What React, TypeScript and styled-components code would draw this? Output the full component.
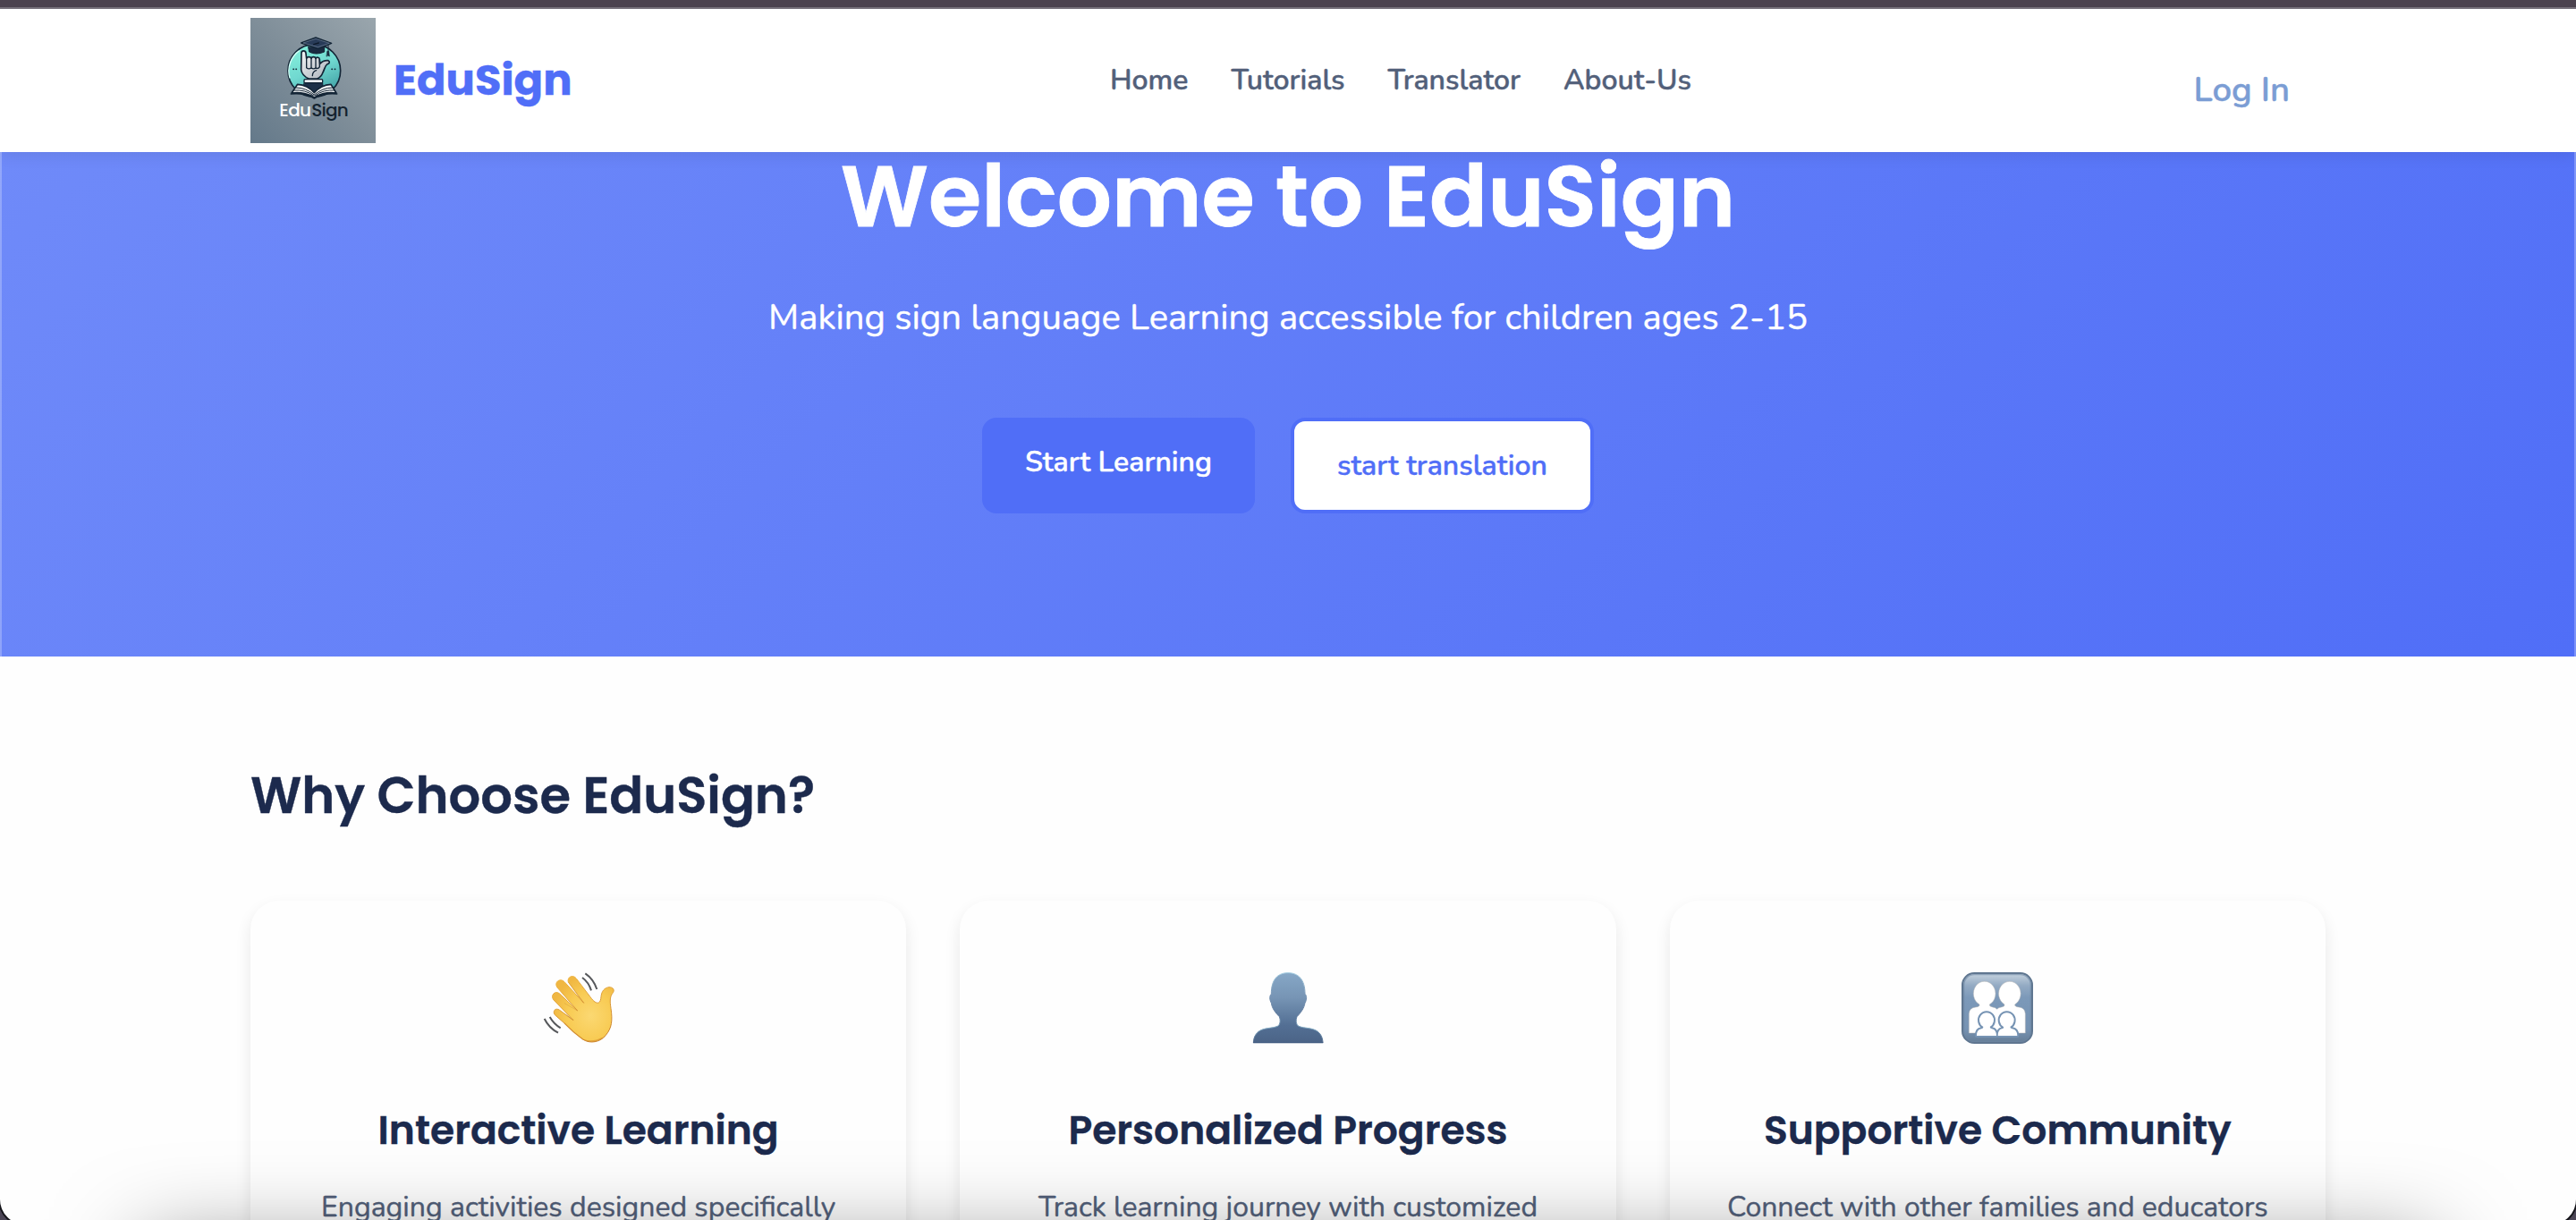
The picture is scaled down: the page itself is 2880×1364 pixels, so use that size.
import React from "react";
import styled, { createGlobalStyle } from "styled-components";

const headingFont = `Poppins, Inter, "Liberation Sans", sans-serif`;
const bodyFont = `Nunito, Lato, "Liberation Sans", sans-serif`;

const GlobalStyle = createGlobalStyle`
  *, *::before, *::after { box-sizing: border-box; }
  html, body { margin: 0; padding: 0; background: #4c434f; }
  body { font-family: ${bodyFont}; -webkit-text-stroke: 0.4px currentColor; }
  h1, h2, h3, p { margin: 0; }
  a { text-decoration: none; color: inherit; }
  svg { -webkit-text-stroke: 0; }
`;

const Viewport = styled.div`
  position: relative;
  height: 1364px;
  overflow: hidden;
  background: #4c4656;
`;

const TopStrip = styled.div`
  position: relative;
  z-index: 1;
  height: 10px;
  background: #4c434f;
  border-bottom: 2px solid #76717a;
`;

const BrowserPane = styled.div`
  position: relative;
  height: 1359px;
  overflow: hidden;
  background: #fefefe;
  border-radius: 0 0 28px 28px;
  box-shadow: 0 0 0 2px #15151a;
`;

const PaneEdges = styled.div`
  position: absolute;
  inset: 0;
  z-index: 3;
  border: solid rgba(255, 255, 255, 0.25);
  border-width: 0 2px;
  pointer-events: none;
`;

const Header = styled.header`
  position: relative;
  z-index: 1;
  display: grid;
  grid-template-columns: 961px auto 1fr;
  align-items: center;
  height: 160px;
  padding: 0 280px;
  background: #fff;
  box-shadow: 0 4px 16px rgba(0, 0, 0, 0.08);
`;

const Brand = styled.a`
  display: flex;
  align-items: center;
  gap: 20px;
`;

const BrandName = styled.span`
  font: 700 48px/60px ${headingFont};
  color: #506ef7;
`;

const Nav = styled.nav`
  display: flex;
  gap: 48px;
`;

const NavLink = styled.a`
  font-size: 32px;
  line-height: 50px;
  font-weight: 600;
  color: #52607a;
`;

const LoginLink = styled.a`
  justify-self: end;
  padding: 19px 40px 0 0;
  font-size: 38.2px;
  line-height: 60px;
  font-weight: 600;
  color: #7b9dd4;
`;

const Hero = styled.section`
  display: flex;
  flex-direction: column;
  align-items: center;
  height: 564px;
  padding-top: 2px;
  background: linear-gradient(135deg, #6f8af9 0%, #506ef7 100%);
  color: #fff;
  text-align: center;
`;

const HeroTitle = styled.h1`
  margin-bottom: 55px;
  font: 600 96px/96px ${headingFont};
  -webkit-text-stroke-width: 0.8px;
`;

const HeroText = styled.p`
  margin-bottom: 80px;
  font-size: 40px;
  line-height: 64px;
`;

const HeroActions = styled.div`
  display: flex;
  justify-content: center;
  gap: 40px;
`;

const HeroButton = styled.a<{ $outlined?: boolean }>`
  height: 107px;
  padding: 24px 48px;
  border: ${(p) => (p.$outlined ? "4px solid #506ef7" : "0")};
  border-radius: 16px;
  background: ${(p) => (p.$outlined ? "#fff" : "#506ef7")};
  color: ${(p) => (p.$outlined ? "#506ef7" : "#fff")};
  font-size: 32px;
  line-height: 51px;
  font-weight: 600;
`;

const Features = styled.section`
  padding: 120px 280px 0;
`;

const SectionTitle = styled.h2`
  margin-bottom: 81px;
  font: 600 56px/72px ${headingFont};
  color: #1c2a4d;
`;

const CardGrid = styled.div`
  display: grid;
  grid-template-columns: repeat(3, 1fr);
  gap: 60px;
`;

const Card = styled.article`
  display: flex;
  flex-direction: column;
  align-items: center;
  height: 480px;
  padding-top: 80px;
  border-radius: 32px;
  background: #fefefe;
  box-shadow: 0 8px 18px rgba(0, 0, 0, 0.09);
  text-align: center;
`;

const CardIcon = styled.svg`
  display: block;
  width: 80px;
  height: 80px;
  margin-bottom: 67px;
  overflow: visible;
`;

const CardTitle = styled.h3`
  margin-bottom: 30px;
  font: 600 44px/60px ${headingFont};
  color: #1c2a4d;
`;

const CardText = styled.p`
  font-size: 32px;
  line-height: 51px;
  white-space: nowrap;
  color: #52607a;
`;

const DockShadow = styled.div`
  position: absolute;
  z-index: 2;
  left: 160px;
  right: 160px;
  top: 1396px;
  height: 300px;
  box-shadow: 0 0 100px rgba(0, 0, 0, 0.5);
  pointer-events: none;
`;

const Logo = () => (
  <svg width="140" height="140" viewBox="60 60 420 420">
    <defs>
      <linearGradient id="slate" x1="0" y1="1" x2="1" y2="0">
        <stop offset="0" stopColor="#64798a" />
        <stop offset="0.5" stopColor="#7f8e99" />
        <stop offset="1" stopColor="#9aa6ad" />
      </linearGradient>
      <linearGradient id="teal" x1="0.2" y1="0" x2="0.7" y2="1">
        <stop offset="0" stopColor="#86f0dc" />
        <stop offset="0.5" stopColor="#70d8d0" />
        <stop offset="1" stopColor="#3f9fa3" />
      </linearGradient>
      <linearGradient id="palm" x1="0" y1="0" x2="1" y2="1">
        <stop offset="0" stopColor="#f4f5f6" />
        <stop offset="1" stopColor="#a9b1b9" />
      </linearGradient>
    </defs>
    <rect x="60" y="60" width="420" height="420" fill="url(#slate)" />
    <circle cx="274" cy="237" r="88" fill="url(#teal)" stroke="#132536" strokeWidth="5" />
    <path d="M192 262A84 84 0 0 1 224 170" fill="none" stroke="#d5fff7" strokeWidth="4" />
    <g stroke="#132536" strokeLinejoin="round" strokeLinecap="round">
      <path d="M231 178C231 168 245 168 246 178L248 196C250 189 262 189 264 196C266 189 277 189 279 196C282 190 292 192 292 200L293 214C301 205 311 202 321 203C328 207 325 213 318 215C309 221 309 232 303 243C299 254 292 261 284 264H256C242 258 232 248 230 234Z" fill="url(#palm)" strokeWidth="5" />
      <path d="M248 196V227Q256 234 264 227V196M264 227Q272 234 279 227V196M279 227Q287 233 292 224V200M268 254Q268 240 281 236" fill="none" strokeWidth="4" />
      <path d="M254 158L257 174Q280 186 308 174V156Z" fill="#1a2a40" strokeWidth="3" />
      <path d="M230 144L279 126L332 145L287 164Z" fill="#283b58" strokeWidth="4" />
      <path d="M321 150V172" fill="none" strokeWidth="3" />
      <path d="M318 172H323L325 189L320 186L316 189Z" fill="#1a2a40" strokeWidth="2" />
      <path d="M241 278H302L304 299Q286 301 274 316Q260 302 238 298Z" fill="#1c3048" strokeWidth="3" />
      <rect x="240" y="266" width="62" height="12" rx="3" fill="#e9edf0" strokeWidth="4" />
      <path d="M198 312L218 283Q252 285 274 311Q296 285 330 283L348 312Q311 307 282 322L274 328L266 322Q235 307 198 312Z" fill="#f3f5f6" strokeWidth="5" />
      <path d="M196 315Q236 311 265 325L274 330L283 325Q314 311 350 315" fill="none" strokeWidth="5" />
      <path d="M205 303Q243 299 272 321M212 294Q247 294 274 318M343 303Q305 299 276 321M336 294Q301 294 274 318" fill="none" strokeWidth="3" />
      <path d="M204 232H205M213 232H214M333 232H334M343 232H344" strokeWidth="5" />
    </g>
    <path d="M237 144L279 130L325 145L286 158Z" fill="none" stroke="#8796aa" strokeWidth="1.5" />
    <path d="M272 149L289 144" stroke="#0e1a2a" strokeWidth="4" strokeLinecap="round" />
    <g fontFamily={headingFont} fontSize="60" fontWeight="500">
      <text x="157" y="389" fill="#fff" textLength="107">Edu</text>
      <text x="265" y="389" fill="#14232f" textLength="124">Sign</text>
    </g>
  </svg>
);

const WaveIcon = () => (
  <CardIcon viewBox="50 51 240 240">
    <defs>
      <radialGradient id="skin" cx="0.62" cy="0.6" r="0.62">
        <stop offset="0" stopColor="#fbd872" />
        <stop offset="0.6" stopColor="#f8cb53" />
        <stop offset="1" stopColor="#f0b742" />
      </radialGradient>
      <linearGradient id="skinEdge" x1="0.3" y1="0" x2="0.6" y2="1">
        <stop offset="0" stopColor="#eeb545" />
        <stop offset="1" stopColor="#c77c24" />
      </linearGradient>
    </defs>
    <path
      d="M135 84C130 67 151 57 162 72L209 134C220 149 229 156 237 153C243 150 244 142 245 133C247 114 256 103 272 101C288 101 291 113 284 121C275 132 274 146 278 172C284 214 281 238 261 262C243 286 207 292 184 276C162 260 142 242 122 222L90 194C81 182 92 168 106 178L152 212L86 144C74 129 90 111 105 122L166 180L98 102C86 85 107 68 122 83L187 154Z"
      fill="url(#skin)"
      stroke="url(#skinEdge)"
      strokeWidth="3"
      strokeLinejoin="round"
    />
    <path d="M122 222Q150 252 184 276Q215 290 250 271" fill="none" stroke="#d28a2c" strokeWidth="4" opacity="0.6" />
    <path d="M136 85L187 154M122 155L166 180M128 194L152 212" fill="none" stroke="#c98d35" strokeWidth="2" opacity="0.5" />
    <g fill="none" stroke="#56585b" strokeWidth="6">
      <path d="M182 69Q203 84 212 112M192 55Q220 74 231 108M73 201Q86 224 109 238M55 207Q70 238 101 254" />
    </g>
  </CardIcon>
);

const PersonIcon = () => (
  <CardIcon viewBox="60 51 240 240">
    <defs>
      <linearGradient id="bust" x1="0" y1="0" x2="0" y2="1">
        <stop offset="0" stopColor="#86a7c6" />
        <stop offset="0.35" stopColor="#7795b5" />
        <stop offset="0.75" stopColor="#536f94" />
        <stop offset="1" stopColor="#4b6487" />
      </linearGradient>
      <linearGradient id="bustRim" x1="0" y1="0" x2="0" y2="1">
        <stop offset="0" stopColor="#a5cfe2" />
        <stop offset="0.3" stopColor="#7795b5" />
        <stop offset="0.6" stopColor="#5a7599" />
        <stop offset="0.8" stopColor="#82abc4" />
        <stop offset="1" stopColor="#4b6487" />
      </linearGradient>
    </defs>
    <path
      d="M180 53C215 53 237 75 237 124C244 130 243 144 237 154C234 172 222 188 210 200C206 210 206 226 216 232C235 240 262 236 280 250C292 260 296 272 297 287H64C65 272 69 260 81 250C99 236 126 240 145 232C155 226 155 210 151 200C139 188 126 172 124 154C118 144 117 130 124 124C124 75 145 53 180 53Z"
      fill="url(#bust)"
      stroke="url(#bustRim)"
      strokeWidth="3"
    />
    <path d="M63 287H298" stroke="#3f5a80" strokeWidth="3" />
  </CardIcon>
);

const childPaths = [
  "M121 264Q120 244 137 241Q144 240 143 234A24 25 0 1 1 165 234Q165 240 172 241Q187 244 187 264Z",
  "M192 264Q192 244 205 241Q213 240 211 234A24 25 0 1 1 233 234Q233 240 240 241Q257 244 257 264Z",
];

const FamilyIcon = () => (
  <CardIcon viewBox="70 51 240 240">
    <defs>
      <linearGradient id="tile" x1="0" y1="0" x2="0" y2="1">
        <stop offset="0" stopColor="#c6d3df" />
        <stop offset="0.18" stopColor="#93aac3" />
        <stop offset="0.35" stopColor="#7c99b9" />
        <stop offset="0.8" stopColor="#7693b3" />
        <stop offset="1" stopColor="#657c95" />
      </linearGradient>
    </defs>
    <rect x="73" y="54" width="234" height="234" rx="40" fill="url(#tile)" stroke="#5f7690" strokeWidth="6" />
    <rect x="78" y="59" width="224" height="224" rx="35" fill="none" stroke="#6d86a2" strokeWidth="4" opacity="0.6" />
    <path
      d="M95 255V190Q96 170 118 168Q132 167 130 159A37 41 0 1 1 164 159Q163 166 174 168Q184 169 189 175Q194 169 204 168Q216 166 214 159A37 41 0 1 1 249 159Q248 167 262 168Q283 170 284 190V255Z"
      fill="#fff"
      stroke="#b3b3b3"
      strokeWidth="1.5"
    />
    <g stroke="#7693b3" strokeWidth="12" strokeLinejoin="round">
      {childPaths.map((d) => <path key={d} d={d} />)}
    </g>
    <g fill="#fff">
      {childPaths.map((d) => <path key={d} d={d} />)}
    </g>
  </CardIcon>
);

const links = ["Home", "Tutorials", "Translator", "About-Us"];

const features = [
  { Icon: WaveIcon, title: "Interactive Learning", text: "Engaging activities designed specifically" },
  { Icon: PersonIcon, title: "Personalized Progress", text: "Track learning journey with customized" },
  { Icon: FamilyIcon, title: "Supportive Community", text: "Connect with other families and educators" },
];

export default function App() {
  return (
    <Viewport>
      <GlobalStyle />
      <TopStrip />
      <BrowserPane>
        <Header>
          <Brand href="#">
            <Logo />
            <BrandName>EduSign</BrandName>
          </Brand>
          <Nav>
            {links.map((label) => (
              <NavLink key={label} href="#">{label}</NavLink>
            ))}
          </Nav>
          <LoginLink href="#">Log In</LoginLink>
        </Header>
        <Hero>
          <HeroTitle>Welcome to EduSign</HeroTitle>
          <HeroText>Making sign language Learning accessible for children ages 2-15</HeroText>
          <HeroActions>
            <HeroButton href="#">Start Learning</HeroButton>
            <HeroButton href="#" $outlined>start translation</HeroButton>
          </HeroActions>
        </Hero>
        <Features>
          <SectionTitle>Why Choose EduSign?</SectionTitle>
          <CardGrid>
            {features.map(({ Icon, title, text }) => (
              <Card key={title}>
                <Icon />
                <CardTitle>{title}</CardTitle>
                <CardText>{text}</CardText>
              </Card>
            ))}
          </CardGrid>
        </Features>
        <PaneEdges />
      </BrowserPane>
      <DockShadow />
    </Viewport>
  );
}
